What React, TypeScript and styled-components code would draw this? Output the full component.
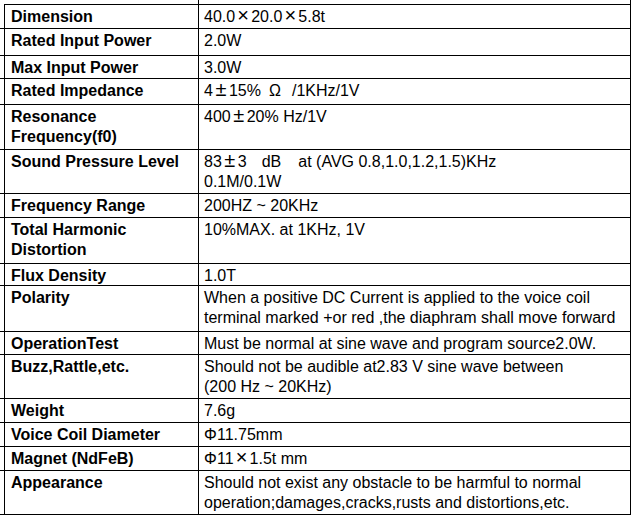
import React from 'react'
import styled, { createGlobalStyle } from 'styled-components'

const GlobalStyle = createGlobalStyle`
  html, body {
    margin: 0;
    padding: 0;
    background: #fff;
  }
  body {
    font-family: 'Liberation Sans', Arial, sans-serif;
    color: #000;
  }
`

const Table = styled.div`
  width: 631px;
  display: flex;
  flex-direction: column;
`

// 上一张表被截掉的底边
const CutRow = styled.div`
  display: grid;
  grid-template-columns: 4px 195px 432px;
  height: 5px;
`

const CutCell = styled.div`
  box-sizing: border-box;
  border-bottom: 1px solid #000;
  border-right: 1px solid #000;
`

const Row = styled.div<{ $h: number }>`
  display: grid;
  grid-template-columns: 4px 195px 432px;
  height: ${(p) => p.$h}px;
  box-sizing: border-box;
  border-bottom: 1px solid #000;
`

const Label = styled.div`
  box-sizing: border-box;
  border-left: 1px solid #000;
  border-right: 1px solid #000;
  padding: 2px 0 0 6px;
  font-size: 16px;
  font-weight: 700;
  line-height: 20px;
  white-space: nowrap;
`

const Value = styled.div`
  box-sizing: border-box;
  border-right: 1px solid #000;
  padding: 2px 0 0 5px;
  font-size: 16px;
  line-height: 20px;
  white-space: nowrap;
`

// 全角符号 (×, ±, Ω, Φ)
const Wide = styled.span<{ $w?: number; $fs?: number }>`
  display: inline-block;
  width: ${(p) => p.$w ?? 16}px;
  height: 16px;
  font-size: ${(p) => p.$fs ?? 20}px;
  line-height: 16px;
  text-align: center;
`

const Gap = styled.span<{ $w: number }>`
  display: inline-block;
  width: ${(p) => p.$w}px;
`

// 一行规格
type Spec = {
  label: React.ReactNode
  value: React.ReactNode
  h: number
}

const specs: Spec[] = [
  {
    label: 'Dimension',
    value: (
      <>
        40.0<Wide>×</Wide>20.0<Wide>×</Wide>5.8t
      </>
    ),
    h: 24
  },
  { label: 'Rated Input Power', value: '2.0W', h: 27 },
  { label: 'Max Input Power', value: '3.0W', h: 23 },
  {
    label: 'Rated Impedance',
    value: (
      <>
        4<Wide>±</Wide>15%<Wide $w={28} $fs={16}>Ω</Wide>
        <Gap $w={3} />/1KHz/1V
      </>
    ),
    h: 26
  },
  {
    label: (
      <>
        Resonance
        <br />
        Frequency(f0)
      </>
    ),
    value: (
      <>
        400<Wide>±</Wide>20% Hz/1V
      </>
    ),
    h: 45
  },
  {
    label: 'Sound Pressure Level',
    value: (
      <>
        83<Wide>±</Wide>3<Gap $w={15} />
        dB<Gap $w={17} />
        at (AVG 0.8,1.0,1.2,1.5)KHz
        <br />
        0.1M/0.1W
      </>
    ),
    h: 44
  },
  { label: 'Frequency Range', value: '200HZ ~ 20KHz', h: 24 },
  {
    label: (
      <>
        Total Harmonic
        <br />
        Distortion
      </>
    ),
    value: '10%MAX. at 1KHz, 1V',
    h: 46
  },
  { label: 'Flux Density', value: '1.0T', h: 22 },
  {
    label: 'Polarity',
    value: (
      <>
        When a positive DC Current is applied to the voice coil
        <br />
        terminal marked +or red ,the diaphram shall move forward
      </>
    ),
    h: 46
  },
  { label: 'OperationTest', value: 'Must be normal at sine wave and program source2.0W.', h: 23 },
  {
    label: 'Buzz,Rattle,etc.',
    value: (
      <>
        Should not be audible at2.83 V sine wave between
        <br />
        (200 Hz ~ 20KHz)
      </>
    ),
    h: 44
  },
  { label: 'Weight', value: '7.6g', h: 24 },
  {
    label: 'Voice Coil Diameter',
    value: (
      <>
        <Wide $w={13} $fs={16}>Φ</Wide>11.75mm
      </>
    ),
    h: 24
  },
  {
    label: 'Magnet (NdFeB)',
    value: (
      <>
        <Wide $w={13} $fs={16}>Φ</Wide>11<Wide>×</Wide>1.5t mm
      </>
    ),
    h: 24
  },
  {
    label: 'Appearance',
    value: (
      <>
        Should not exist any obstacle to be harmful to normal
        <br />
        operation;damages,cracks,rusts and distortions,etc.
      </>
    ),
    h: 44
  }
]

const App: React.FC = () => {
  return (
    <>
      <GlobalStyle />
      <Table>
        <CutRow>
          <span />
          <CutCell />
          <CutCell />
        </CutRow>
        {specs.map((s, i) => (
          <Row key={i} $h={s.h}>
            <span />
            <Label>{s.label}</Label>
            <Value>{s.value}</Value>
          </Row>
        ))}
      </Table>
    </>
  )
}

export default App
